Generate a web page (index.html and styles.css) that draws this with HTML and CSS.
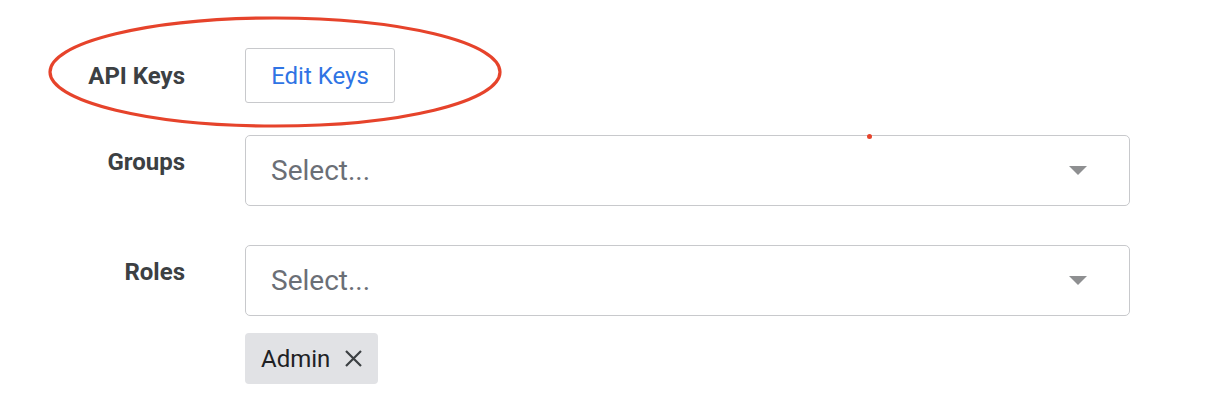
FILE: index.html
```html
<!DOCTYPE html>
<html>
<head>
    <meta charset="UTF-8" />
    <title>User Settings</title>
    <link rel="stylesheet" href="styles.css">
</head>
<body>
    <div class="form">
        <!-- highlight drawn round the API keys row -->
        <svg class="highlight" width="460" height="116" viewBox="0 0 460 116">
            <ellipse cx="227" cy="56" rx="225" ry="54" fill="none" stroke="#e6432b" stroke-width="3.2" />
        </svg>
        <span class="dot"></span>

        <div class="row row-center">
            <label class="label">API Keys</label>
            <button class="edit-btn">Edit Keys</button>
        </div>

        <div class="row row-groups">
            <label class="label label-top">Groups</label>
            <div class="select">
                <span class="placeholder">Select...</span>
                <span class="arrow"></span>
            </div>
        </div>

        <div class="row row-roles">
            <label class="label label-top">Roles</label>
            <div class="field">
                <div class="select">
                    <span class="placeholder">Select...</span>
                    <span class="arrow"></span>
                </div>
                <div class="chips">
                    <span class="chip">Admin
                        <svg class="chip-x" width="19" height="19" viewBox="0 0 19 19">
                            <path d="M2 2 L17 17 M17 2 L2 17" stroke="#3c4043" stroke-width="2.2" />
                        </svg>
                    </span>
                </div>
            </div>
        </div>
    </div>
</body>
</html>
```

FILE: styles.css
```css
:root {
    --text: #3c4043;
    --muted: #6b6f76;
    --border: #c8c9cc;
    --blue: #2f74e4;
}

* {
    box-sizing: border-box;
}

body {
    margin: 0;
    font-family: Roboto, 'Noto Sans', sans-serif;
    color: var(--text);
    background: #fff;
}

.form {
    position: relative;
    padding-top: 48px;
}

.highlight {
    position: absolute;
    left: 48px;
    top: 16px;
}

.dot {
    position: absolute;
    left: 867px;
    top: 134px;
    width: 5px;
    height: 5px;
    border-radius: 50%;
    background: #e6432b;
    z-index: 2;
}

.row {
    display: flex;
    gap: 60px;
}

.row-center {
    align-items: center;
}

.row-groups {
    margin-top: 32px;
}

.row-roles {
    margin-top: 39px;
}

.label {
    width: 185px;
    flex-shrink: 0;
    text-align: right;
    font-size: 24px;
    font-weight: 700;
    line-height: 28px;
}

.label-top {
    padding-top: 13px;
}

.edit-btn {
    width: 150px;
    height: 55px;
    background: #fff;
    border: 1.5px solid var(--border);
    border-radius: 3px;
    color: var(--blue);
    font-family: inherit;
    font-size: 24px;
    padding: 0;
}

.field {
    display: flex;
    flex-direction: column;
}

.select {
    width: 885px;
    height: 71px;
    border: 1.5px solid var(--border);
    border-radius: 5px;
    display: flex;
    align-items: center;
    justify-content: space-between;
    padding: 0 42px 0 25px;
}

.placeholder {
    font-size: 28px;
    color: var(--muted);
}

.arrow {
    width: 0;
    height: 0;
    border-left: 9px solid transparent;
    border-right: 9px solid transparent;
    border-top: 9px solid #8e8f91;
}

.chips {
    display: flex;
    margin-top: 17px;
}

.chip {
    display: flex;
    align-items: center;
    gap: 14px;
    height: 51px;
    padding: 0 15px 0 16px;
    background: #e1e2e5;
    border-radius: 4px;
    font-size: 24px;
    color: #202124;
}
```
